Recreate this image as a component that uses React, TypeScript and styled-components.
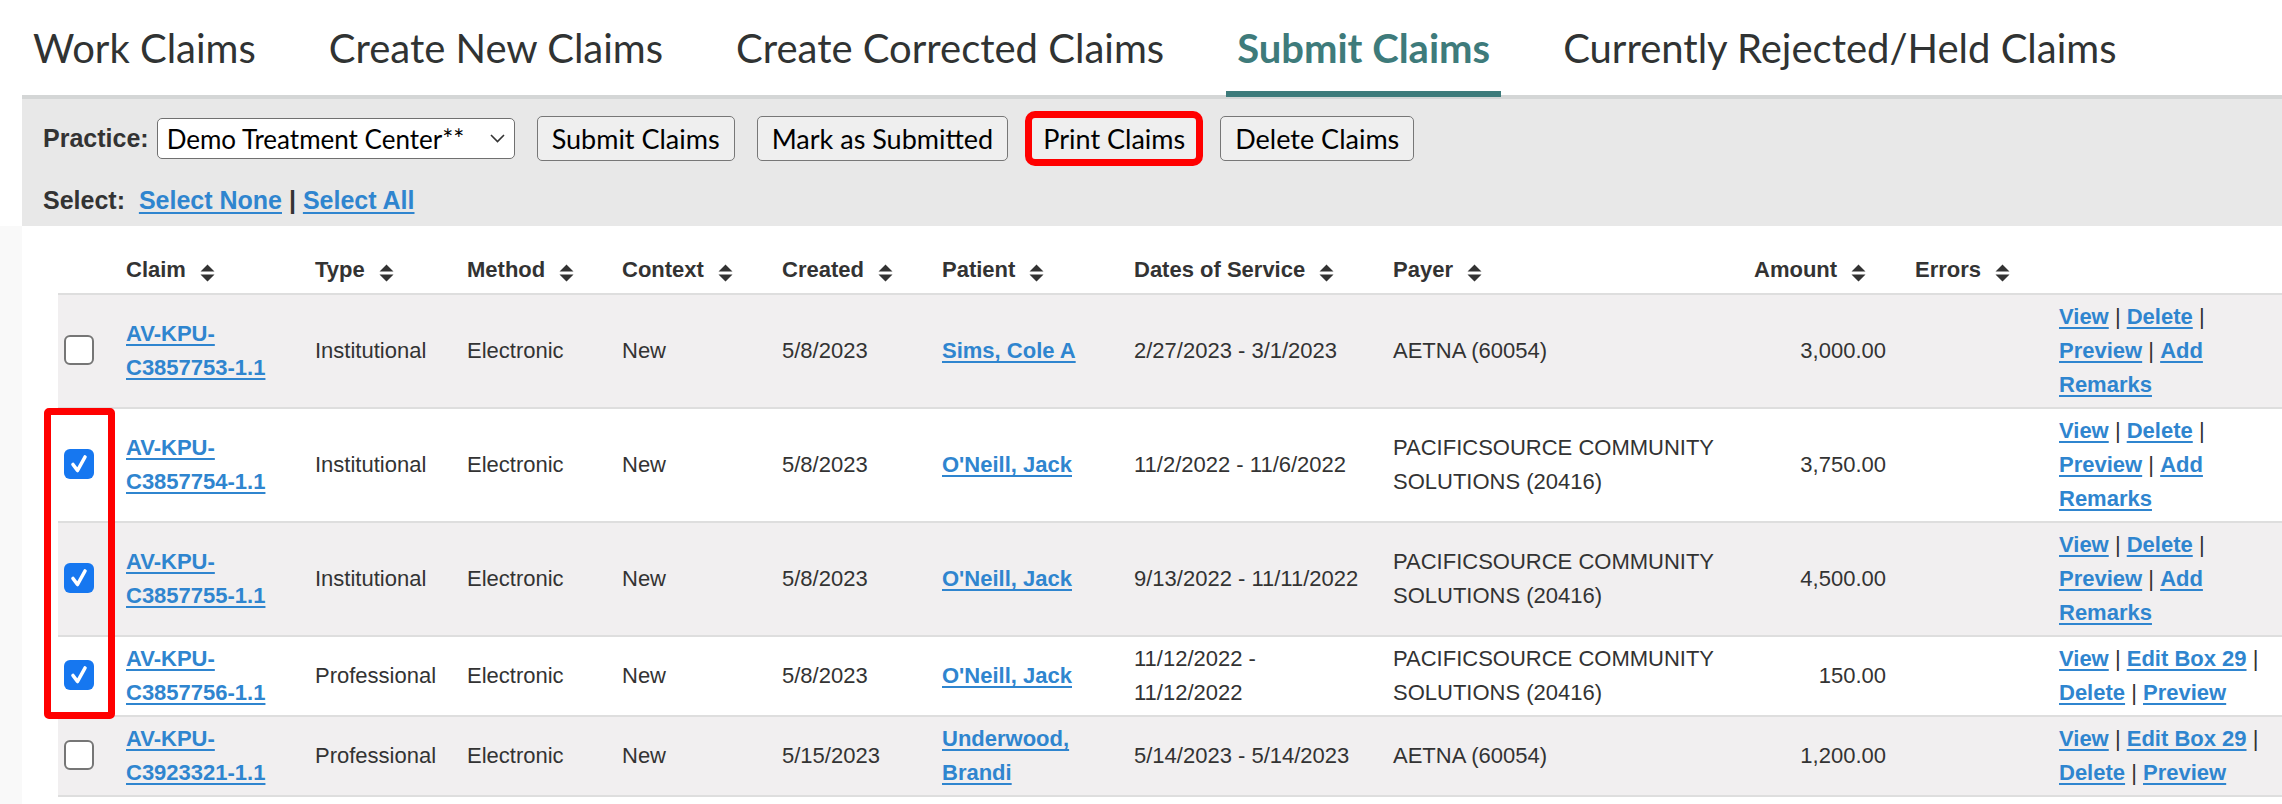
import React, { FC, Fragment } from "react";
import styled, { createGlobalStyle } from "styled-components";

const GlobalStyle = createGlobalStyle`
  * {
    box-sizing: border-box;
  }
  html,
  body {
    margin: 0;
    padding: 0;
    background: #fff;
  }
  body {
    font-family: "Liberation Sans", Arial, sans-serif;
    color: #333;
    overflow: hidden;
  }
`;

const TabBar = styled.nav`
  position: relative;
  z-index: 1;
  display: flex;
  gap: 51px;
  padding: 24px 0 0 22px;
  margin-bottom: -2px;
`;

interface ITabProps {
  $active?: boolean;
}
const Tab = styled.a<ITabProps>`
  font-family: Lato, "Open Sans", sans-serif;
  font-size: 40px;
  line-height: 48px;
  font-weight: ${({ $active }): number => ($active ? 700 : 400)};
  color: ${({ $active }): string => ($active ? "#3e7b7b" : "#303333")};
  padding: 0 11px 19px;
  border-bottom: 6px solid ${({ $active }): string => ($active ? "#3d7b7b" : "transparent")};
  white-space: nowrap;
`;

const Panel = styled.section`
  margin-left: 22px;
  padding: 17px 21px 9px;
  background: #e8e8e8;
  border-top: 4px solid #d4d6d6;
`;

const Toolbar = styled.div`
  display: flex;
  align-items: center;
  gap: 22px;
  height: 45px;
`;

const Label = styled.span`
  margin-right: -14px;
  font-size: 25px;
  font-weight: 700;
  color: #333;
`;

const SelectBox = styled.div`
  display: flex;
  align-items: center;
  justify-content: space-between;
  width: 358px;
  height: 41px;
  padding: 0 9px;
  background: #fff;
  border: 1.5px solid #707070;
  border-radius: 5px;
  font-family: Lato, "Open Sans", sans-serif;
  font-size: 26px;
  color: #000;
`;

interface IButtonProps {
  $highlight?: boolean;
}
const Button = styled.button<IButtonProps>`
  height: 45px;
  padding: 0 ${({ $highlight }): string => ($highlight ? "12px" : "14px")};
  font-family: Lato, "Open Sans", sans-serif;
  font-size: 27px;
  color: #000;
  background: #efefef;
  border: 1.5px solid #777;
  border-radius: 5px;
  outline: ${({ $highlight }): string => ($highlight ? "7px solid #ff0000" : "none")};
  outline-offset: -2px;
`;

const SelectRow = styled.div`
  margin-top: 22px;
  font-size: 25px;
  line-height: 34px;
  font-weight: 700;
  color: #333;
`;

const Link = styled.a`
  color: #2f85cf;
  font-weight: 700;
  text-decoration: underline;
  text-decoration-thickness: 2px;
  text-underline-offset: 3px;
  cursor: pointer;
`;

const TableSection = styled.section`
  position: relative;
  padding: 23px 0 0 58px;
  min-height: 600px;
  background: linear-gradient(to right, #f9f9f9 22px, #fff 22px);
`;

const Table = styled.table`
  width: 2224px;
  table-layout: fixed;
  border-collapse: collapse;
  font-size: 22px;
  line-height: 34px;
  color: #333;
`;

const Th = styled.th`
  text-align: left;
  font-weight: 700;
  padding: 4px 22px 6px 6px;
  border-bottom: 2px solid #dedede;
  white-space: nowrap;
`;

interface IRowProps {
  $shaded?: boolean;
}
const Row = styled.tr<IRowProps>`
  background: ${({ $shaded }): string => ($shaded ? "#f1eff0" : "#fff")};
`;

interface ICellProps {
  $align?: string;
  $padRight?: string;
}
const Td = styled.td<ICellProps>`
  padding: 5px ${({ $padRight }): string => $padRight || "22px"} 5px 6px;
  text-align: ${({ $align }): string => $align || "left"};
  vertical-align: middle;
  border-bottom: 2px solid #dedede;
`;

const SortSvg = styled.svg`
  margin-left: 14px;
  vertical-align: -5px;
`;

interface ICheckProps {
  $checked?: boolean;
}
const CheckBox = styled.span<ICheckProps>`
  display: block;
  width: 30px;
  height: 30px;
  margin-top: -3px;
  border-radius: 6px;
  border: ${({ $checked }): string => ($checked ? "none" : "2.5px solid #767676")};
  background: ${({ $checked }): string => ($checked ? "#1677f0" : "#fff")};
`;

const Sep = styled.span`
  color: #333;
`;

// red annotation drawn over the checkbox column
const Callout = styled.div`
  position: absolute;
  left: 44px;
  top: 182px;
  width: 71px;
  height: 311px;
  border: 7px solid #ff0000;
  border-radius: 5px;
  pointer-events: none;
`;

const SortIcon: FC = () => (
  <SortSvg width="15" height="18" viewBox="0 0 15 18">
    <path d="M0.5 7.5 L7.5 0.5 L14.5 7.5 Z M0.5 10.5 L7.5 17.5 L14.5 10.5 Z" fill="#333" />
  </SortSvg>
);

const Chevron: FC = () => (
  <svg width="15" height="9" viewBox="0 0 15 9">
    <polyline points="1,1 7.5,7.5 14,1" fill="none" stroke="#333" strokeWidth="1.6" />
  </svg>
);

const Check: FC<{ checked: boolean }> = ({ checked }) => (
  <CheckBox $checked={checked}>
    {checked && (
      <svg width="30" height="30" viewBox="0 0 30 30">
        <polyline
          points="9,15.5 13.5,21.5 21,8"
          fill="none"
          stroke="#fff"
          strokeWidth="3.6"
          strokeLinecap="round"
          strokeLinejoin="round"
        />
      </svg>
    )}
  </CheckBox>
);

const tabs = ["Work Claims", "Create New Claims", "Create Corrected Claims", "Submit Claims", "Currently Rejected/Held Claims"];

const columns = [
  { key: "check", width: 62 },
  { key: "Claim", width: 189 },
  { key: "Type", width: 152 },
  { key: "Method", width: 155 },
  { key: "Context", width: 160 },
  { key: "Created", width: 160 },
  { key: "Patient", width: 192 },
  { key: "Dates of Service", width: 259 },
  { key: "Payer", width: 361 },
  { key: "Amount", width: 161 },
  { key: "Errors", width: 144 },
  { key: "actions", width: 229 },
];

const longActions = ["View", "Delete", "Preview", "Add Remarks"];
const shortActions = ["View", "Edit Box 29", "Delete", "Preview"];
const pacific = "PACIFICSOURCE COMMUNITY SOLUTIONS (20416)";

const claims = [
  { id: "AV-KPU-C3857753-1.1", type: "Institutional", created: "5/8/2023", patient: "Sims, Cole A", dates: "2/27/2023 - 3/1/2023", payer: "AETNA (60054)", amount: "3,000.00", actions: longActions, checked: false },
  { id: "AV-KPU-C3857754-1.1", type: "Institutional", created: "5/8/2023", patient: "O'Neill, Jack", dates: "11/2/2022 - 11/6/2022", payer: pacific, amount: "3,750.00", actions: longActions, checked: true },
  { id: "AV-KPU-C3857755-1.1", type: "Institutional", created: "5/8/2023", patient: "O'Neill, Jack", dates: "9/13/2022 - 11/11/2022", payer: pacific, amount: "4,500.00", actions: longActions, checked: true },
  { id: "AV-KPU-C3857756-1.1", type: "Professional", created: "5/8/2023", patient: "O'Neill, Jack", dates: "11/12/2022 - 11/12/2022", payer: pacific, amount: "150.00", actions: shortActions, checked: true },
  { id: "AV-KPU-C3923321-1.1", type: "Professional", created: "5/15/2023", patient: "Underwood, Brandi", dates: "5/14/2023 - 5/14/2023", payer: "AETNA (60054)", amount: "1,200.00", actions: shortActions, checked: false },
];

const App: FC = () => {
  return (
    <>
      <GlobalStyle />
      <TabBar>
        {tabs.map((tab) => (
          <Tab key={tab} $active={tab === "Submit Claims"}>
            {tab}
          </Tab>
        ))}
      </TabBar>

      <Panel>
        <Toolbar>
          <Label>Practice:</Label>
          <SelectBox>
            <span>Demo Treatment Center**</span>
            <Chevron />
          </SelectBox>
          <Button>Submit Claims</Button>
          <Button>Mark as Submitted</Button>
          <Button $highlight>Print Claims</Button>
          <Button>Delete Claims</Button>
        </Toolbar>
        <SelectRow>
          Select:&nbsp; <Link>Select None</Link> | <Link>Select All</Link>
        </SelectRow>
      </Panel>

      <TableSection>
        <Table>
          <colgroup>
            {columns.map((col) => (
              <col key={col.key} style={{ width: col.width }} />
            ))}
          </colgroup>
          <thead>
            <tr>
              {columns.map((col) =>
                col.key === "check" || col.key === "actions" ? (
                  <Th key={col.key} />
                ) : (
                  <Th key={col.key}>
                    {col.key}
                    <SortIcon />
                  </Th>
                )
              )}
            </tr>
          </thead>
          <tbody>
            {claims.map((claim, index) => (
              <Row key={claim.id} $shaded={index % 2 === 0}>
                <Td $padRight="6px">
                  <Check checked={claim.checked} />
                </Td>
                <Td>
                  <Link>{claim.id}</Link>
                </Td>
                <Td>{claim.type}</Td>
                <Td>Electronic</Td>
                <Td>New</Td>
                <Td>{claim.created}</Td>
                <Td>
                  <Link>{claim.patient}</Link>
                </Td>
                <Td>{claim.dates}</Td>
                <Td>{claim.payer}</Td>
                <Td $align="right" $padRight="23px">
                  {claim.amount}
                </Td>
                <Td />
                <Td $padRight="12px">
                  {claim.actions.map((action, i) => (
                    <Fragment key={action}>
                      {i > 0 && (
                        <>
                          {" "}
                          <Sep>|</Sep>{" "}
                        </>
                      )}
                      <Link>{action}</Link>
                    </Fragment>
                  ))}
                </Td>
              </Row>
            ))}
          </tbody>
        </Table>
        <Callout />
      </TableSection>
    </>
  );
};

export default App;
